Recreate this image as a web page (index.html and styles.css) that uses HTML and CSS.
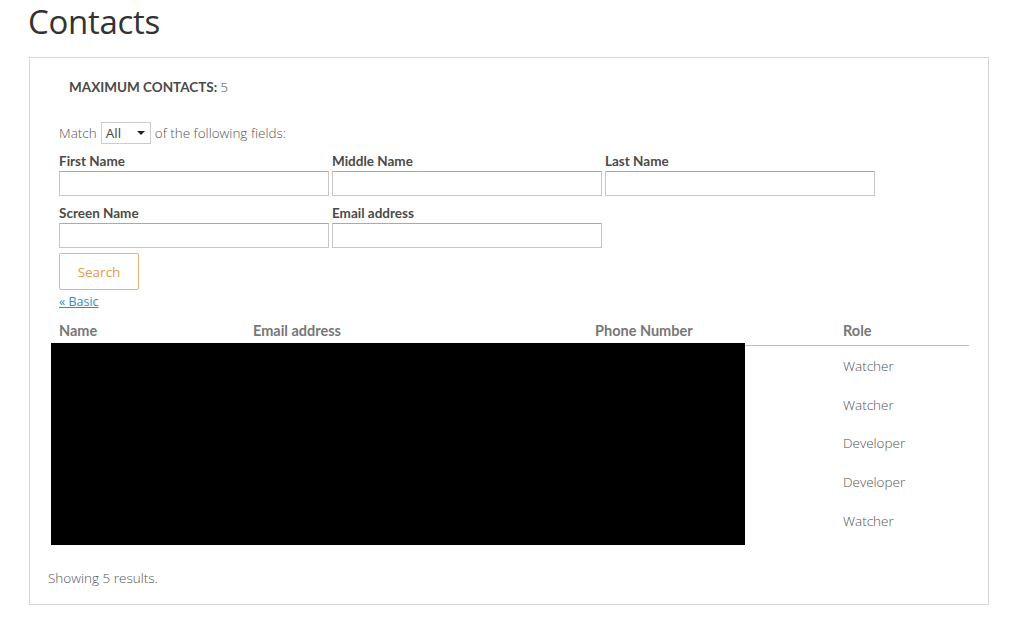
FILE: index.html
```html
<!DOCTYPE html>
<html>
<head>
<meta charset="utf-8">
<link rel="stylesheet" href="styles.css">
</head>
<body>
<h1 class="title">Contacts</h1>
<div class="panel">
  <div class="maxline"><b>MAXIMUM CONTACTS:</b> 5</div>
  <form class="search">
    <div class="match">Match
      <span class="select"><span class="sel-val">All</span><span class="caret"></span></span>
      of the following fields:</div>
    <div class="fields">
      <label class="field"><span class="lbl">First Name</span><span class="input"></span></label>
      <label class="field"><span class="lbl">Middle Name</span><span class="input"></span></label>
      <label class="field"><span class="lbl">Last Name</span><span class="input"></span></label>
      <label class="field"><span class="lbl">Screen Name</span><span class="input"></span></label>
      <label class="field"><span class="lbl">Email address</span><span class="input"></span></label>
    </div>
    <div class="btnrow"><span class="btn">Search</span></div>
    <a class="basic" href="#">« Basic</a>
  </form>
  <div class="tablewrap">
    <table class="results">
      <thead>
        <tr><th class="c1">Name</th><th class="c2">Email address</th><th class="c3">Phone Number</th><th class="c4">Role</th></tr>
      </thead>
      <tbody>
        <tr><td></td><td></td><td></td><td>Watcher</td></tr>
        <tr><td></td><td></td><td></td><td>Watcher</td></tr>
        <tr><td></td><td></td><td></td><td>Developer</td></tr>
        <tr><td></td><td></td><td></td><td>Developer</td></tr>
        <tr><td></td><td></td><td></td><td>Watcher</td></tr>
      </tbody>
    </table>
    <div class="redact"></div>
  </div>
  <div class="showing">Showing 5 results.</div>
</div>
</body>
</html>
```
FILE: styles.css
```css
body {
  margin: 0;
  background: #fff;
  font-family: "Open Sans", "Liberation Sans", sans-serif;
  color: #444;
}
.title {
  margin: 0 0 0 28px;
  font-family: "Open Sans", sans-serif;
  font-weight: 400;
  font-size: 33px;
  line-height: 44px;
  color: #333;
  letter-spacing: -0.3px;
}
.panel {
  margin: 13px 0 0 29px;
  width: 958px;
  height: 546px;
  border: 1px solid #d6d6d6;
  position: relative;
}
.maxline {
  margin: 20px 0 0 39px;
  font-size: 13px;
  line-height: 18px;
  font-weight: 300;
  color: #444;
}
.maxline b {
  font-family: Lato, sans-serif;
  font-weight: 700;
  font-size: 13.5px;
  color: #4a4a4a;
}
.search {
  margin: 26px 0 0 29px;
}
.match {
  font-size: 13.5px;
  font-weight: 300;
  line-height: 22px;
  display: flex;
  align-items: center;
  gap: 4px;
  color: #555;
}
.select {
  display: inline-flex;
  align-items: center;
  justify-content: space-between;
  height: 20px;
  border: 1px solid #ccc;
  padding: 0 5px 0 4px;
  box-sizing: content-box;
  width: 39px;
  font-weight: 400;
  color: #444;
}
.caret {
  width: 0;
  height: 0;
  border-left: 4px solid transparent;
  border-right: 4px solid transparent;
  border-top: 4px solid #222;
}
.fields {
  display: grid;
  grid-template-columns: repeat(3, 270px);
  column-gap: 3px;
  row-gap: 7px;
  margin-top: 7px;
}
.field {
  display: flex;
  flex-direction: column;
}
.lbl {
  font-family: Lato, sans-serif;
  font-weight: 700;
  font-size: 13.5px;
  line-height: 20px;
  color: #4a4a4a;
}
.input {
  height: 23px;
  border: 1px solid #c6c6c6;
  border-top-color: #aaa;
  background: #fff;
}
.btnrow {
  margin-top: 5px;
}
.btn {
  display: inline-flex;
  align-items: center;
  justify-content: center;
  width: 78px;
  height: 35px;
  border: 1px solid #eab37a;
  border-radius: 2px;
  color: #e59a4b;
  font-size: 13.5px;
  font-weight: 400;
}
.basic {
  display: block;
  margin-top: 3px;
  font-size: 12.5px;
  font-weight: 400;
  line-height: 18px;
  color: #2f8fb8;
  width: max-content;
}
.tablewrap {
  position: relative;
  margin: 4px 0 0 21px;
  width: 918px;
}
.results {
  width: 918px;
  border-collapse: collapse;
  table-layout: fixed;
}
.results th {
  text-align: left;
  font-family: Lato, sans-serif;
  font-weight: 700;
  font-size: 14.5px;
  color: #777;
  height: 30px;
  padding: 0;
  border-bottom: 1px solid #bcbcbc;
  vertical-align: middle;
}
.results th.c1 { width: 194px; padding-left: 8px; }
.results th.c2 { width: 342px; }
.results th.c3 { width: 248px; }
.results td {
  height: 38.6px;
  padding: 0;
  font-size: 13.5px;
  font-weight: 300;
  color: #555;
  vertical-align: middle;
}
.results tbody tr:first-child td { padding-top: 1px; }
.redact {
  position: absolute;
  left: 0;
  top: 28px;
  width: 694px;
  height: 202px;
  background: #000;
}
.showing {
  position: absolute;
  left: 18px;
  top: 510px;
  font-size: 13.5px;
  font-weight: 300;
  color: #555;
  line-height: 20px;
}
```
